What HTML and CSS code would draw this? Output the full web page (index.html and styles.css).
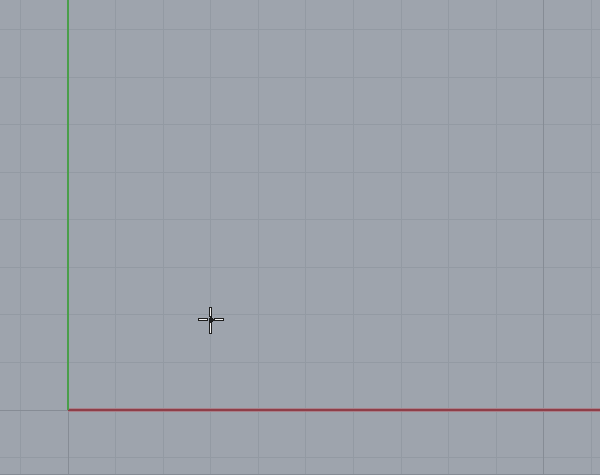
FILE: index.html
```html
<!DOCTYPE html>
<html>
<head>
<meta charset="utf-8">
<link rel="stylesheet" href="styles.css">
</head>
<body>
<div class="viewport">
<svg class="grid" width="600" height="475" viewBox="0 0 600 475" shape-rendering="crispEdges">
  <g class="minor">
    <line x1="20.5" y1="0" x2="20.5" y2="475"/>
    <line x1="115.5" y1="0" x2="115.5" y2="475"/>
    <line x1="163.5" y1="0" x2="163.5" y2="475"/>
    <line x1="210.5" y1="0" x2="210.5" y2="475"/>
    <line x1="258.5" y1="0" x2="258.5" y2="475"/>
    <line x1="305.5" y1="0" x2="305.5" y2="475"/>
    <line x1="353.5" y1="0" x2="353.5" y2="475"/>
    <line x1="401.5" y1="0" x2="401.5" y2="475"/>
    <line x1="448.5" y1="0" x2="448.5" y2="475"/>
    <line x1="496.5" y1="0" x2="496.5" y2="475"/>
    <line x1="591.5" y1="0" x2="591.5" y2="475"/>
    <line x1="0" y1="29.5" x2="600" y2="29.5"/>
    <line x1="0" y1="77.5" x2="600" y2="77.5"/>
    <line x1="0" y1="124.5" x2="600" y2="124.5"/>
    <line x1="0" y1="172.5" x2="600" y2="172.5"/>
    <line x1="0" y1="219.5" x2="600" y2="219.5"/>
    <line x1="0" y1="267.5" x2="600" y2="267.5"/>
    <line x1="0" y1="314.5" x2="600" y2="314.5"/>
    <line x1="0" y1="362.5" x2="600" y2="362.5"/>
    <line x1="0" y1="457.5" x2="600" y2="457.5"/>
  </g>
  <g class="major">
    <line x1="543.5" y1="0" x2="543.5" y2="475"/>
    <line x1="0" y1="410.5" x2="68" y2="410.5"/>
    <line x1="68.5" y1="410" x2="68.5" y2="475"/>
    <line x1="0" y1="474.5" x2="600" y2="474.5"/>
  </g>
  <rect class="axis-x-glow" x="68" y="408" width="532" height="4"/>
  <rect class="axis-x" x="68" y="409" width="532" height="2"/>
  <rect class="axis-y" x="67" y="0" width="2" height="410"/>
</svg>
<svg class="cursor" width="32" height="32" viewBox="0 0 32 32" shape-rendering="crispEdges">
  <g class="cursor-bar">
    <rect x="14.5" y="4.5" width="2" height="9"/>
    <rect x="14.5" y="19.5" width="2" height="11"/>
    <rect x="3.5" y="15.5" width="9" height="2"/>
    <rect x="19.5" y="15.5" width="9" height="2"/>
  </g>
  <path class="cursor-dot" d="M15 14h2v1h1v1h1v2h-1v1h-1v1h-2v-1h-1v-4h1z"/>
</svg>
</div>
</body>
</html>
```

FILE: styles.css
```css
html, body {
  margin: 0;
  padding: 0;
  background: #9ea4ad;
  overflow: hidden;
}
.viewport {
  position: relative;
  width: 600px;
  height: 475px;
  background: #9ea4ad;
}
.grid {
  display: block;
}
.minor line {
  stroke: #939aa3;
  stroke-width: 1;
}
.major line {
  stroke: #868c95;
  stroke-width: 1;
}
.axis-x-glow {
  fill: #a8808a;
}
.axis-x {
  fill: #8e3e48;
}
.axis-y {
  fill: #4a9e4a;
}
.cursor {
  position: absolute;
  left: 195px;
  top: 303px;
}
.cursor-bar rect {
  fill: #f2f2f2;
  stroke: #1e1e1e;
  stroke-width: 1;
}
.cursor-dot {
  fill: #1e1e1e;
}
```
